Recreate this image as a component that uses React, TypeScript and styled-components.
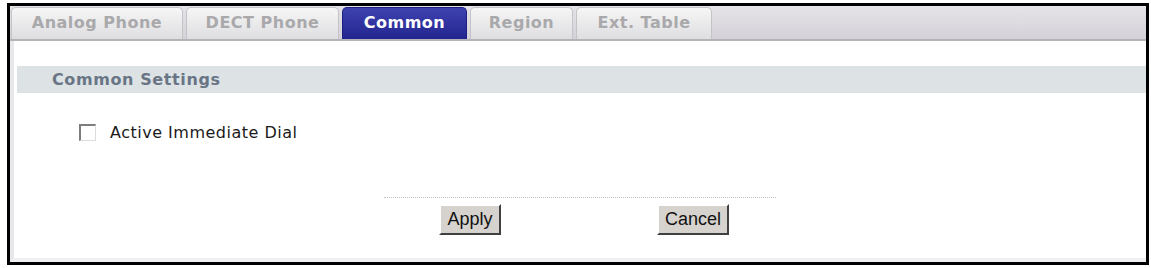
import React from 'react';
import styled, { createGlobalStyle } from 'styled-components';

const GlobalStyle = createGlobalStyle`
  body {
    margin: 0;
    background: #ffffff;
    font-family: "DejaVu Sans", Verdana, sans-serif;
  }
`;

const Frame = styled.div`
  box-sizing: border-box;
  width: 1142px;
  height: 262px;
  margin: 3px 0 0 7px;
  border: 3px solid #000;
  display: flex;
  flex-direction: column;
  background: #fff;
`;

const TabBar = styled.div`
  height: 35px;
  display: flex;
  align-items: flex-end;
  padding-left: 1px;
  background: linear-gradient(#e6e3e8, #d4d2d8);
  border-bottom: 2px solid #b4b4b8;
  box-sizing: border-box;
`;

const Tab = styled.div<{ $active?: boolean; $width: number }>`
  box-sizing: border-box;
  width: ${({ $width }) => $width}px;
  height: 32px;
  margin-right: 3px;
  display: flex;
  align-items: center;
  justify-content: center;
  padding-bottom: 2px;
  font-size: 16px;
  letter-spacing: 0.5px;
  font-weight: bold;
  border-radius: 5px 5px 0 0;
  color: ${({ $active }) => ($active ? '#ffffff' : '#a9a9ab')};
  background: ${({ $active }) =>
    $active ? 'linear-gradient(#3e42b0, #23258f)' : 'linear-gradient(#f6f6f6, #dedde0)'};
  border: 1px solid ${({ $active }) => ($active ? '#1d1f80' : '#c4c4c8')};
  border-bottom: none;
`;

const Body = styled.div`
  flex: 1;
  display: flex;
  flex-direction: column;
  border-left: 4px solid #e8e8ea;
  border-bottom: 4px solid #f0f0f2;
`;

const SectionHeader = styled.div`
  margin: 25px 0 0 3px;
  height: 27px;
  display: flex;
  align-items: center;
  padding-left: 35px;
  background: #dde2e5;
  color: #697585;
  font-size: 16px;
  font-weight: bold;
  letter-spacing: 0.6px;
`;

const OptionRow = styled.label`
  margin: 30px 0 0 65px;
  display: flex;
  align-items: center;
  gap: 14px;
  font-size: 16px;
  letter-spacing: 0.5px;
  color: #1a1a1a;
`;

const Box = styled.span`
  box-sizing: border-box;
  width: 17px;
  height: 17px;
  border-top: 2px solid #7e7e7e;
  border-left: 2px solid #7e7e7e;
  border-right: 1px solid #dcdcdc;
  border-bottom: 1px solid #dcdcdc;
  background: #fff;
`;

const Footer = styled.div`
  margin: 55px auto 0;
  width: 392px;
  border-top: 1px dotted #c4c4c8;
  padding-top: 6px;
  display: flex;
  gap: 156px;
  padding-left: 55px;
  box-sizing: border-box;
`;

const Button = styled.button<{ $width: number }>`
  width: ${({ $width }) => $width}px;
  height: 31px;
  background: #d6d3ce;
  border: 2px solid;
  border-color: #ffffff #404040 #404040 #ffffff;
  font-family: "Liberation Sans", Arial, sans-serif;
  font-size: 18px;
  color: #111;
  padding: 0;
`;

const tabs = [
  { label: 'Analog Phone', width: 172 },
  { label: 'DECT Phone', width: 153 },
  { label: 'Common', width: 125, active: true },
  { label: 'Region', width: 103 },
  { label: 'Ext. Table', width: 136 },
];

const App: React.FC = () => (
  <>
    <GlobalStyle />
    <Frame>
      <TabBar>
        {tabs.map((t) => (
          <Tab key={t.label} $width={t.width} $active={t.active}>
            {t.label}
          </Tab>
        ))}
      </TabBar>
      <Body>
        <SectionHeader>Common Settings</SectionHeader>
        <OptionRow>
          <Box />
          Active Immediate Dial
        </OptionRow>
        <Footer>
          <Button $width={62}>Apply</Button>
          <Button $width={72}>Cancel</Button>
        </Footer>
      </Body>
    </Frame>
  </>
);

export default App;
